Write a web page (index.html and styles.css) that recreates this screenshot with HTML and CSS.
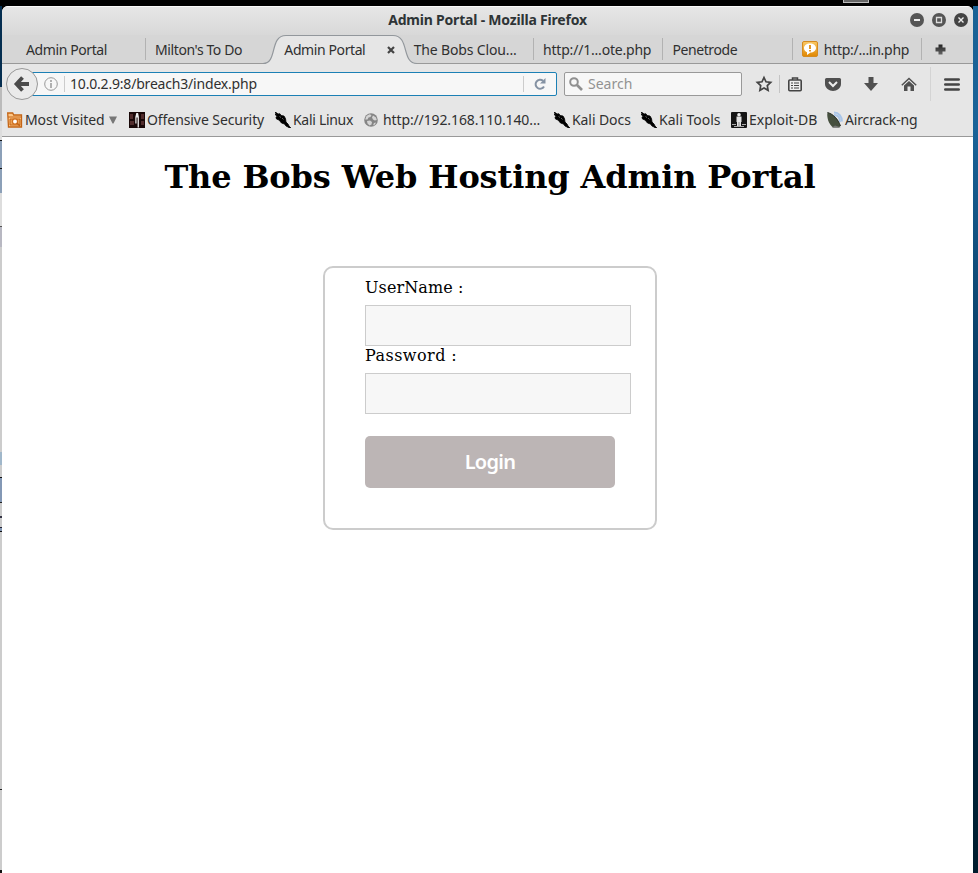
FILE: index.html
```html
<!DOCTYPE html>
<html lang="en">
<head>
<meta charset="utf-8">
<title>Admin Portal</title>
<link rel="stylesheet" href="styles.css">
</head>
<body>
<svg class="defs" width="0" height="0">
  <defs>
    <symbol id="dragon" viewBox="0 0 16 16"><path d="M0 0l1.500.8L3 2l2-.2 1 1.700 3 .5 1.500 2.500.5 3.500 2 2 1 2 2 2.200-1.500-.2-1.500-1-2-1-1.500-2-3-1-2.500-3L1.500 7 1 5l1.500-.8L0 2.500l1.500.2z" fill="#000" stroke="#000" stroke-width=".8"/><path d="M4.500 4.500l1.500 1M7 6l1.500 1.500" stroke="#777" stroke-width=".8"/></symbol>
    <linearGradient id="orange" x2="0" y2="1"><stop stop-color="#f9c968"/><stop offset="1" stop-color="#e08700"/></linearGradient>
    <linearGradient id="plus" x2="0" y2="1"><stop stop-color="#222"/><stop offset="1" stop-color="#666"/></linearGradient>
  </defs>
</svg>
<div class="panel"><i class="panel-item"></i></div>
<div class="desktop">
  <div class="behind"></div>
  <main class="window">
    <header class="titlebar">
      <span class="title">Admin Portal - Mozilla Firefox</span>
      <div class="controls">
        <svg width="14" height="14"><circle cx="7" cy="7" r="7" fill="#555"/><path d="M4 7h6" stroke="#eee" stroke-width="2"/></svg>
        <svg width="14" height="14"><circle cx="7" cy="7" r="7" fill="#555"/><path d="M4.500 4.500h5v5h-5z" fill="none" stroke="#ddd" stroke-width="1.300"/></svg>
        <svg width="14" height="14"><circle cx="7" cy="7" r="7" fill="#444"/><path d="M4.500 4.500l5 5m0-5l-5 5" stroke="#eee" stroke-width="1.400"/></svg>
      </div>
    </header>
    <nav class="tabs">
      <div class="tab sep">Admin Portal</div>
      <div class="tab">Milton's To Do</div>
      <div class="tab active">
        <svg class="shape" width="154" height="29" viewBox="0 0 154 29"><path d="M0 28.500C15 28.500 6 .5 23 .5H130C147 .5 138 28.500 154 28.500V29H0z" fill="#e6e6e6"/><path d="M0 28.500C15 28.500 6 .5 23 .5H130C147 .5 138 28.500 154 28.500" fill="none" stroke="#92979c" stroke-width="1.200"/></svg>
        <span class="label">Admin Portal</span>
        <svg class="close" width="8" height="8"><path d="M1 1l6 6m0-6L1 7" stroke="#444" stroke-width="2.200"/></svg>
      </div>
      <div class="tab sep cloud">The Bobs Clou...</div>
      <div class="tab sep remote">http://1...ote.php</div>
      <div class="tab sep pen">Penetrode</div>
      <div class="tab sep fav">
        <svg width="16" height="16"><rect x=".5" y=".5" width="15" height="15" rx="1.500" fill="url(#orange)" stroke="#d58b20"/><path d="M8 2.500c3.500 0 6 1.800 6 4.500s-2.500 4.500-5.500 4.500L5 14v-2.800C3 10.500 2 9 2 7c0-2.700 2.500-4.500 6-4.500z" fill="#fff"/><path d="M8 4v4m0 1v1.500" stroke="#e08c10" stroke-width="1.800"/></svg>
        <span>http:/...in.php</span>
      </div>
      <svg class="newtab" width="11" height="11"><path d="M3.500.5h4v3h3v4h-3v3h-4v-3h-3v-4h3z" fill="url(#plus)"/></svg>
    </nav>
    <div class="toolbar">
      <svg class="back" width="32" height="32"><circle cx="16" cy="16" r="15.500" fill="#eaeaea" stroke="#999"/><path d="M16.500 9.500L10.500 16l6 6.500M10.500 16h12.500" fill="none" stroke="#4b4b4b" stroke-width="3.800"/></svg>
      <div class="url">
        <svg width="14" height="14"><circle cx="7" cy="7" r="6.300" fill="none" stroke="#999"/><path d="M7 3v2m0 1v5" stroke="#999" stroke-width="1.500"/></svg>
        <span class="address">10.0.2.9:8/breach3/index.php</span>
        <span class="reload"><svg width="12" height="12"><path d="M10 8.500A4.500 4.500 0 1 1 9 2.800" fill="none" stroke="#8592a3" stroke-width="2"/><path d="M11.500 0v5.500H6z" fill="#8592a3"/></svg></span>
      </div>
      <div class="search">
        <svg width="14" height="14"><circle cx="5" cy="5" r="3.800" fill="none" stroke="#909090" stroke-width="2"/><path d="M8 8l5 5" stroke="#909090" stroke-width="2.600"/></svg>
        <span>Search</span>
      </div>
      <div class="tools">
        <svg width="16" height="16"><path d="M8 1.500l2 4.300 4.700.6-3.400 3.200.8 4.700L8 12l-4.100 2.300.8-4.700L1.300 6.400 6 5.800z" fill="none" stroke="#444" stroke-width="1.700"/></svg>
        <i class="rule"></i>
        <svg class="list" width="14" height="15"><path d="M4.500 3V1h5v2" fill="none" stroke="#444" stroke-width="1.500"/><rect x=".8" y="3" width="12.400" height="10.800" rx="1" fill="#eee" stroke="#444" stroke-width="1.600"/><path d="M3 6h2m1 0h5M3 8.500h2m1 0h5M3 11h2m1 0h5" stroke="#444" stroke-width="1.100"/></svg>
        <svg class="pocket" width="16" height="15"><path d="M1.500 1h13q1.500 0 1.500 1.500V7c0 4-4 7-8 7S0 11 0 7V2.500Q0 1 1.500 1z" fill="#505050"/><path d="M4 5l4 4 4-4" fill="none" stroke="#eee" stroke-width="2"/></svg>
        <svg class="down" width="14" height="14"><path d="M4.500 0h5v6H14l-7 8-7-8h4.500z" fill="#505050"/></svg>
        <svg class="home" width="16" height="15"><path d="M.8 8.300L8 1.500l7.200 6.800" fill="none" stroke="#505050" stroke-width="1.500"/><path d="M3 8.500l5-4.500 5 4.500V14H9.500V9.500h-3V14H3z" fill="#505050"/></svg>
        <i class="rule tall"></i>
        <svg class="menu" width="16" height="13"><path d="M1.300 1.500h13.400M1.300 6.500h13.400M1.300 11.500h13.400" stroke="#444" stroke-width="2.600" stroke-linecap="round"/></svg>
      </div>
    </div>
    <div class="bookmarks">
      <div class="mark visited"><svg width="16" height="16"><path d="M.7 1h5l1 2H14.500v12H1.500z" fill="#ffc786" stroke="#c46516" stroke-width="1.300"/><path d="M1 5h13.500M3 7h10v6H3z" fill="#efa75b" stroke="#c46516"/><circle cx="8" cy="9.500" r="2.600" fill="#fff" stroke="#d27323" stroke-width="1.300"/><path d="M10 11l3 3" stroke="#c46516" stroke-width="1.500"/></svg><span>Most Visited</span><svg class="arrow" width="8" height="8"><path d="M0 .5h8L4.500 7.500h-1z" fill="#777"/></svg></div>
      <div class="mark offensive"><svg width="16" height="16"><path d="M0 0h16v16H0z" fill="#190808"/><path d="M1 2h3v5H1zm0 7h4v4H1zm11-7h3v5h-3zm0 7h3v4h-3z" fill="#512c2c"/><path d="M7.300 1h1.800l.8 4v10.500H8.600V5.500H7.500v6H6.300V5z" fill="#eee"/></svg><span>Offensive Security</span></div>
      <div class="mark linux"><svg width="16" height="16"><use href="#dragon"/></svg><span>Kali Linux</span></div>
      <div class="mark ip"><svg width="14" height="14"><circle cx="7" cy="7" r="6.800" fill="#858585"/><path d="M2.500 3l3-1.800 2 .8-1 2-2 .5-1 2H1.200zM9 2.500l3 2 .8 2.500-2 .5L9 6.500l-1-2zM3 8l3-.5L8 9l-.5 2.500-2 1-2-2zm7 2l2-.5-1 2-2 1z" fill="#d4d4d4"/></svg><span>http://192.168.110.140...</span></div>
      <div class="mark docs"><svg width="16" height="16"><use href="#dragon"/></svg><span>Kali Docs</span></div>
      <div class="mark ktools"><svg width="16" height="16"><use href="#dragon"/></svg><span>Kali Tools</span></div>
      <div class="mark exploit"><svg width="16" height="16"><rect width="16" height="16" rx="1" fill="#151515"/><path d="M1 12.500h4m6 0h4M3 14.500h10" stroke="#aaa"/><circle cx="8" cy="2.800" r="1.800" fill="#eee"/><path d="M5.500 4.500h5V10H10v4H6v-4h-.5z" fill="#e4e4e4"/><path d="M8 10v4" stroke="#777" stroke-width=".8"/></svg><span>Exploit-DB</span></div>
      <div class="mark aircrack"><svg width="16" height="16"><path d="M7 .5c5 0 8 4 8 9M7 3c4 0 6 3 6 7" fill="none" stroke="#a9c5e8" stroke-width="1.800"/><path d="M.5.5C5 1 11 6 13.500 14L12 15.500H6C1.500 12-.5 5 .5.5z" fill="#46503f"/><path d="M.5.5C6 2 11 7 13.500 14" fill="none" stroke="#2b3028"/><path d="M5 15.500l3-2 6 2z" fill="#777"/></svg><span>Aircrack-ng</span></div>
    </div>
    <section class="page">
      <h1>The Bobs Web Hosting Admin Portal</h1>
      <form class="login">
        <label for="user">UserName :</label>
        <input id="user" type="text">
        <label for="pass" class="pass">Password :</label>
        <input id="pass" type="password">
        <button type="button">Login</button>
      </form>
    </section>
  </main>
  <div class="wallpaper"></div>
</div>
</body>
</html>
```
FILE: styles.css
```css
* { box-sizing: border-box; }
body { margin: 0; width: 978px; height: 873px; overflow: hidden; background: #000; font: 14px/20px "Noto Sans", sans-serif; color: #303030; }
svg { display: block; flex: none; overflow: visible; }
.defs { position: absolute; }
.panel { height: 6px; background: #000; }
.panel-item { display: block; width: 26px; height: 3px; margin-left: 843px; background: #666; border: 1px solid #bbb; border-top: 0; }
.desktop { display: flex; height: 867px; }
.behind { width: 2px; background: linear-gradient(#052e50 0 81px, #bbb 81px 115px, #ddd 115px 134px, #111 134px 135px, #8ca0b8 135px 162px, #111 162px 163px, #8ca0b8 163px 187px, #ddd 187px 220px, #555 220px 221px, #b8b8c2 221px 241px, #ccc 241px 446px, #a0b7ca 446px 459px, #ccc 459px 471px, #111 471px 472px, #8398b5 472px 496px, #222 496px 497px, #ccc 497px 510px, #334 510px 512px, #ccc 512px 521px, #223 521px 522px, #8398b5 522px 525px, #111 525px 526px, #ccc 526px 783px, #222 783px 784px, #ccc 784px 864px, #111 864px); }
.window { width: 971px; background: #fff; border-radius: 6px 6px 0 0; overflow: hidden; }
.wallpaper { width: 5px; background: linear-gradient(#1a6295, #1a6398 14%, #0b426b 38%, #003052 55%, #001d2e 100%); }
.titlebar { height: 29px; padding-top: 3px; position: relative; background: linear-gradient(#e6e6e6, #d8d8d8); border-top: 1px solid #fafafa; text-align: center; font-weight: 700; letter-spacing: -.2px; color: #2e3436; }
.controls { position: absolute; right: 5px; top: 6px; display: flex; gap: 8px; }
.tabs { height: 29px; padding-left: 14px; display: grid; grid-template-columns: 130px repeat(6, 129.350px) 30px; align-items: center; background: #d6d6d6; border-bottom: 1px solid #999; }
.tab { position: relative; height: 22px; padding-left: 10px; line-height: 23px; white-space: nowrap; letter-spacing: -.4px; }
.tab + .tab { padding-left: 9px; }
.sep { border-right: 1px solid #b2b2b2; }
.shape { position: absolute; left: -12px; top: -3px; }
.label { position: relative; }
.close { position: absolute; right: 10px; top: 8px; }
.tab.cloud { letter-spacing: -.15px; }
.tab.remote { letter-spacing: -.2px; }
.tab.fav { display: flex; align-items: center; gap: 6px; letter-spacing: -.27px; }
.newtab { margin-left: 13px; margin-top: 1px; }
.toolbar { height: 40px; padding-left: 4px; display: flex; align-items: center; background: #e6e6e6; }
.back { position: relative; z-index: 1; }
.url { width: 530px; height: 24px; margin-left: -11px; padding-left: 16px; display: flex; align-items: center; background: #f7f7f7; border: 1px solid #1c80b5; border-radius: 0 2px 2px 0; }
.address { flex: 1; margin-left: 6px; padding-left: 5px; line-height: 16px; letter-spacing: -.19px; border-left: 1px solid #ccc; }
.reload { width: 33px; height: 16px; padding: 2px 0 0 10px; border-left: 1px solid #ccc; }
.search { width: 178px; height: 24px; margin-left: 7px; padding-left: 4px; display: flex; align-items: center; gap: 5px; background: #f7f7f7; border: 1px solid #999; border-radius: 2px; color: #929292; }
.tools { display: flex; align-items: center; margin-left: 14px; }
.rule { width: 1px; height: 18px; margin: 0 8px 0 7px; background: #c4c4c4; }
.pocket { margin-left: 23px; }
.down { margin-left: 23px; }
.home { margin-left: 23px; }
.rule.tall { height: 34px; margin: 0 13px; background: #d4d4d4; }
.bookmarks { height: 33px; padding-left: 5px; display: flex; align-items: center; background: #e6e6e6; border-bottom: 1px solid #999; }
.mark { display: flex; flex: none; align-items: center; gap: 2px; height: 24px; white-space: nowrap; letter-spacing: -.08px; }
.visited { width: 122px; }
.arrow { margin-left: 2px; }
.offensive { width: 146px; }
.linux { width: 89px; letter-spacing: -.3px; }
.ip { width: 190px; gap: 5px; letter-spacing: -.12px; }
.docs { width: 87px; }
.ktools { width: 90px; letter-spacing: 0; }
.exploit { width: 96px; letter-spacing: 0; }
.aircrack { letter-spacing: -.15px; }
.page { padding-top: 21px; }
h1 { width: 976px; margin: 0; text-align: center; font: bold 32px/38px "DejaVu Serif", serif; letter-spacing: -.14px; color: #000; }
.login { width: 334px; height: 264px; margin: 70px 0 0 321px; padding: 8px 24px 0 40px; border: 2px solid #ccc; border-radius: 10px; }
.login label { display: block; height: 27px; font: 16px/24px "DejaVu Serif", serif; letter-spacing: .1px; color: #000; }
.login .pass { padding-top: 1px; letter-spacing: .45px; }
.login input { display: block; width: 266px; height: 41px; margin: 2px 0 -3px; background: #f7f7f7; border: 1px solid #ccc; border-radius: 0; outline: 0; }
.login .pass + input { margin-top: 3px; }
.login .pass { padding-top: 1px; }
.login button { display: block; width: 250px; height: 52px; margin-top: 25px; padding: 0 0 2px; border: 0; border-radius: 5px; background: #bcb5b5; color: #fff; font: 600 20px "Noto Sans", sans-serif; letter-spacing: -.7px; }
```
